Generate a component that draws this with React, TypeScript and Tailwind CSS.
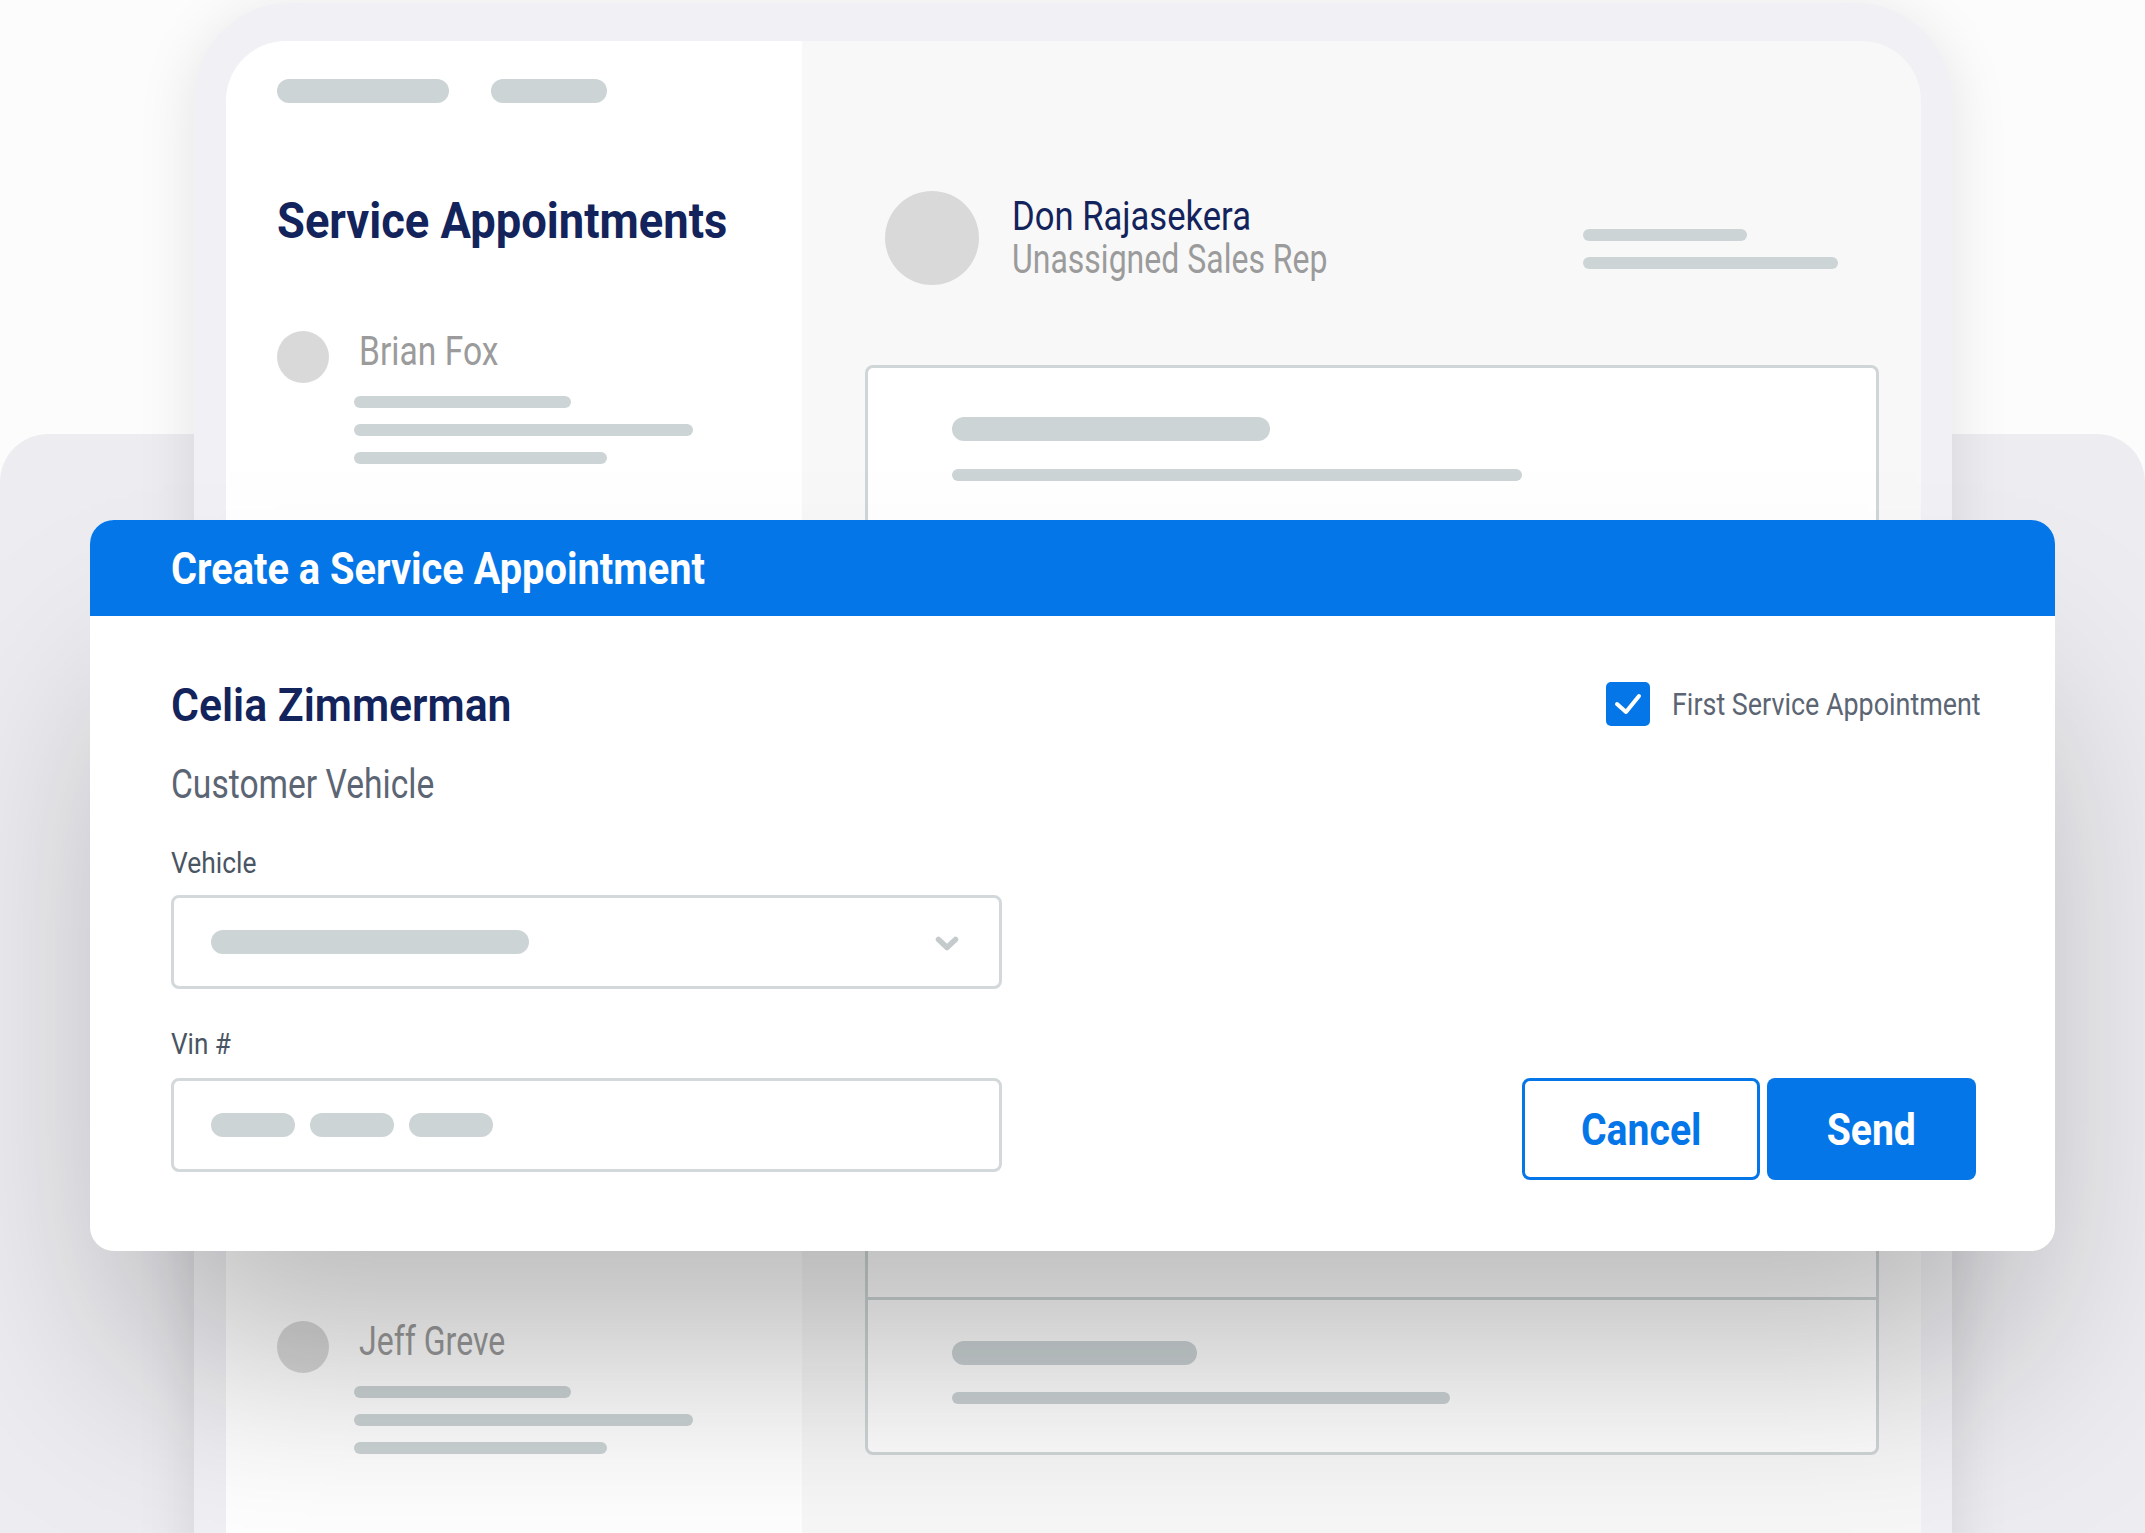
import React from "react";

function T({ children, className = "", s = "scale-x-[0.84]", o = "origin-left" }: { children: React.ReactNode; className?: string; s?: string; o?: string }) {
  return <span className={`inline-block whitespace-nowrap ${o} ${s} ${className}`}>{children}</span>;
}

function Entry({ name, s }: { name: string; s: string }) {
  return (
    <div className="flex flex-col">
      <div className="flex items-start gap-[30px]">
        <div className="h-[52px] w-[52px] shrink-0 rounded-full bg-[#d9d9d9]" />
        <div className="mt-[1px] text-[40px] leading-none text-[#9b9b9b]">
          <T s={s}>{name}</T>
        </div>
      </div>
      <div className="ml-[77px] mt-[13px] flex flex-col gap-[16px]">
        <div className="h-[12px] w-[217px] rounded-full bg-[#cdd4d5]" />
        <div className="h-[12px] w-[339px] rounded-full bg-[#cdd4d5]" />
        <div className="h-[12px] w-[253px] rounded-full bg-[#cdd4d5]" />
      </div>
    </div>
  );
}

export default function App() {
  return (
    <div className="relative h-[1533px] w-[2145px] overflow-hidden bg-[#fcfcfd] font-['Roboto',sans-serif]">
      {/* background card */}
      <div className="absolute left-0 top-[434px] h-[1300px] w-full rounded-[48px] bg-[#ededf1]" />

      {/* device */}
      <div className="relative z-10 ml-[194px] mt-[3px] h-[1600px] w-[1758px] rounded-t-[96px] bg-[#f1f1f5] pl-[32px] pr-[31px] pt-[38px] shadow-[0_10px_60px_rgba(0,0,0,0.10)]">
        <div className="flex h-full overflow-hidden rounded-t-[60px]">
          {/* left panel */}
          <div className="w-[576px] shrink-0 bg-white pl-[51px] pt-[38px]">
            <div className="flex gap-[42px]">
              <div className="h-[24px] w-[172px] rounded-full bg-[#cdd4d5]" />
              <div className="h-[24px] w-[116px] rounded-full bg-[#cdd4d5]" />
            </div>
            <h1 className="mt-[93px] text-[50px] font-bold leading-none text-[#13235b]">
              <T s="scale-x-[0.906]">Service Appointments</T>
            </h1>
            <div className="mt-[85px] flex flex-col gap-[362px]">
              <Entry name="Brian Fox" s="scale-x-[0.84]" />
              <Entry name="Celia Zimmerman" s="scale-x-[0.84]" />
              <Entry name="Jeff Greve" s="scale-x-[0.80]" />
            </div>
          </div>

          {/* right panel */}
          <div className="flex-1 bg-[#f8f8f8] pt-[150px]">
            <div className="flex items-start pl-[83px] pr-[83px]">
              <div className="h-[94px] w-[94px] shrink-0 rounded-full bg-[#d9d9d9]" />
              <div className="ml-[33px] mt-[4px] flex flex-col text-[40px] leading-[43px]">
                <T s="scale-x-[0.865]" className="text-[#13235b]">Don Rajasekera</T>
                <T s="scale-x-[0.80]" className="text-[#9b9b9b]">Unassigned Sales Rep</T>
              </div>
              <div className="ml-auto mt-[38px] flex w-[255px] shrink-0 flex-col gap-[16px]">
                <div className="h-[12px] w-[164px] rounded-full bg-[#cdd4d5]" />
                <div className="h-[12px] w-[255px] rounded-full bg-[#cdd4d5]" />
              </div>
            </div>

            <div className="ml-[63px] mr-[42px] mt-[80px] rounded-[8px] border-[3px] border-[#d0d6d7] bg-white">
              <div className="h-[929px] pl-[84px] pt-[49px]">
                <div className="h-[24px] w-[318px] rounded-full bg-[#cdd4d5]" />
                <div className="mt-[28px] h-[12px] w-[570px] rounded-full bg-[#cdd4d5]" />
              </div>
              <div className="h-[155px] border-t-[3px] border-[#d0d6d7] pl-[84px] pt-[41px]">
                <div className="h-[24px] w-[245px] rounded-full bg-[#cdd4d5]" />
                <div className="mt-[27px] h-[12px] w-[498px] rounded-full bg-[#cdd4d5]" />
              </div>
            </div>
          </div>
        </div>
      </div>

      {/* modal */}
      <div className="absolute left-[90px] top-[520px] z-20 h-[731px] w-[1965px] overflow-hidden rounded-[24px] bg-white shadow-[0_140px_200px_-40px_rgba(0,0,0,0.28)]">
        <div className="flex h-[96px] items-center bg-[#0576e8] pl-[81px]">
          <h2 className="mt-[2px] text-[44px] font-bold leading-none text-white">
            <T s="scale-x-[0.904]">Create a Service Appointment</T>
          </h2>
        </div>
        <div className="flex h-[635px] pl-[81px] pr-[75px]">
          <div className="flex w-[831px] flex-col pt-[65px]">
            <div className="text-[47px] font-semibold leading-none text-[#13235b]">
              <T s="scale-x-[0.91]">Celia Zimmerman</T>
            </div>
            <div className="mt-[37px] text-[40px] leading-none text-[#5b6573]">
              <T>Customer Vehicle</T>
            </div>
            <div className="mt-[43px] text-[30px] leading-none text-[#4a5563]">
              <T s="scale-x-[0.88]">Vehicle</T>
            </div>
            <div className="mt-[17px] flex h-[94px] items-center rounded-[8px] border-[3px] border-[#d3d8db] pl-[37px] pr-[40px]">
              <div className="h-[24px] w-[318px] rounded-full bg-[#cdd4d5]" />
              <svg className="ml-auto mt-[4px]" width="24" height="16" viewBox="0 0 24 16" fill="none">
                <polyline points="3.5,3.5 12,11.5 20.5,3.5" stroke="#c5cacd" strokeWidth="5.5" strokeLinecap="round" strokeLinejoin="round" />
              </svg>
            </div>
            <div className="mt-[40px] text-[30px] leading-none text-[#4a5563]">
              <T s="scale-x-[0.87]">Vin #</T>
            </div>
            <div className="mt-[19px] flex h-[94px] items-center gap-[15px] rounded-[8px] border-[3px] border-[#d3d8db] pl-[37px]">
              <div className="h-[24px] w-[84px] rounded-full bg-[#cdd4d5]" />
              <div className="h-[24px] w-[84px] rounded-full bg-[#cdd4d5]" />
              <div className="h-[24px] w-[84px] rounded-full bg-[#cdd4d5]" />
            </div>
          </div>
          <div className="flex flex-1 flex-col items-end pt-[66px]">
            <div className="flex items-center gap-[22px]">
              <div className="flex h-[44px] w-[44px] items-center justify-center rounded-[5px] bg-[#0576e8]">
                <svg width="44" height="44" viewBox="0 0 44 44" fill="none">
                  <polyline points="11,22 20,30 33,14" stroke="white" strokeWidth="4" strokeLinecap="round" strokeLinejoin="round" />
                </svg>
              </div>
              <div className="w-[308px] text-[32px] leading-none text-[#5b6573]">
                <T>First Service Appointment</T>
              </div>
            </div>
            <div className="mb-[71px] mr-[4px] mt-auto flex gap-[7px]">
              <button className="flex h-[102px] w-[238px] items-center justify-center rounded-[8px] border-[3px] border-[#0576e8] bg-white text-[45px] font-bold leading-none text-[#0576e8]">
                <T o="origin-center" s="scale-x-[0.87]">Cancel</T>
              </button>
              <button className="flex h-[102px] w-[209px] items-center justify-center rounded-[8px] bg-[#0576e8] text-[45px] font-bold leading-none text-white">
                <T o="origin-center" s="scale-x-[0.87]">Send</T>
              </button>
            </div>
          </div>
        </div>
      </div>
    </div>
  );
}
